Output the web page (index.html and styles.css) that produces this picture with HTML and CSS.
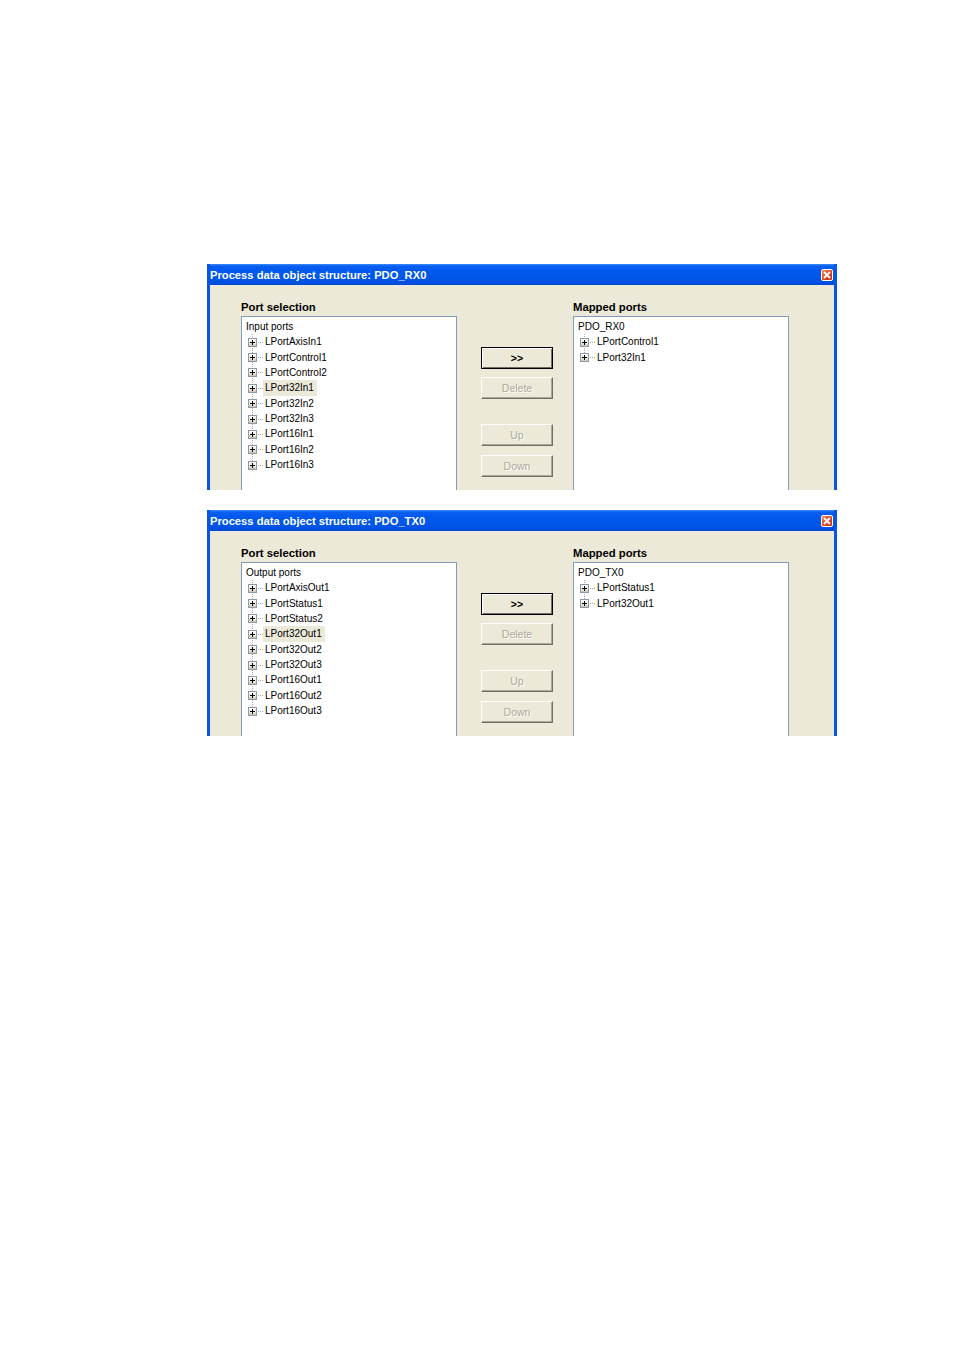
FILE: index.html
```html
<!DOCTYPE html>
<html>
<head>
  <meta charset="utf-8">
  <title>Process data object structure</title>
  <link rel="stylesheet" href="styles.css">
</head>
<body>
  <div class="page">

    <div class="window">
      <div class="titlebar">
        <span class="title">Process data object structure: PDO_RX0</span>
        <span class="close"><svg width="8" height="8" viewBox="0 0 8 8"><path d="M1 1L7 7M7 1L1 7" stroke="#fff" stroke-width="1.8"/></svg></span>
      </div>
      <div class="body">
        <div class="panel">
          <div class="caption">Port selection</div>
          <div class="tree">
            <div class="root">Input ports</div>
            <ul class="nodes">
              <li class="node"><span class="exp"></span><span class="conn"></span><span class="label">LPortAxisIn1</span></li>
              <li class="node"><span class="exp"></span><span class="conn"></span><span class="label">LPortControl1</span></li>
              <li class="node"><span class="exp"></span><span class="conn"></span><span class="label">LPortControl2</span></li>
              <li class="node"><span class="exp"></span><span class="conn"></span><span class="label selected">LPort32In1</span></li>
              <li class="node"><span class="exp"></span><span class="conn"></span><span class="label">LPort32In2</span></li>
              <li class="node"><span class="exp"></span><span class="conn"></span><span class="label">LPort32In3</span></li>
              <li class="node"><span class="exp"></span><span class="conn"></span><span class="label">LPort16In1</span></li>
              <li class="node"><span class="exp"></span><span class="conn"></span><span class="label">LPort16In2</span></li>
              <li class="node"><span class="exp"></span><span class="conn"></span><span class="label">LPort16In3</span></li>
            </ul>
          </div>
        </div>
        <div class="buttons">
          <button class="btn default">&gt;&gt;</button>
          <button class="btn disabled">Delete</button>
          <button class="btn disabled up">Up</button>
          <button class="btn disabled">Down</button>
        </div>
        <div class="panel">
          <div class="caption">Mapped ports</div>
          <div class="tree">
            <div class="root">PDO_RX0</div>
            <ul class="nodes">
              <li class="node"><span class="exp"></span><span class="conn"></span><span class="label">LPortControl1</span></li>
              <li class="node"><span class="exp"></span><span class="conn"></span><span class="label">LPort32In1</span></li>
            </ul>
          </div>
        </div>
      </div>
    </div>

    <div class="window">
      <div class="titlebar">
        <span class="title">Process data object structure: PDO_TX0</span>
        <span class="close"><svg width="8" height="8" viewBox="0 0 8 8"><path d="M1 1L7 7M7 1L1 7" stroke="#fff" stroke-width="1.8"/></svg></span>
      </div>
      <div class="body">
        <div class="panel">
          <div class="caption">Port selection</div>
          <div class="tree">
            <div class="root">Output ports</div>
            <ul class="nodes">
              <li class="node"><span class="exp"></span><span class="conn"></span><span class="label">LPortAxisOut1</span></li>
              <li class="node"><span class="exp"></span><span class="conn"></span><span class="label">LPortStatus1</span></li>
              <li class="node"><span class="exp"></span><span class="conn"></span><span class="label">LPortStatus2</span></li>
              <li class="node"><span class="exp"></span><span class="conn"></span><span class="label selected">LPort32Out1</span></li>
              <li class="node"><span class="exp"></span><span class="conn"></span><span class="label">LPort32Out2</span></li>
              <li class="node"><span class="exp"></span><span class="conn"></span><span class="label">LPort32Out3</span></li>
              <li class="node"><span class="exp"></span><span class="conn"></span><span class="label">LPort16Out1</span></li>
              <li class="node"><span class="exp"></span><span class="conn"></span><span class="label">LPort16Out2</span></li>
              <li class="node"><span class="exp"></span><span class="conn"></span><span class="label">LPort16Out3</span></li>
            </ul>
          </div>
        </div>
        <div class="buttons">
          <button class="btn default">&gt;&gt;</button>
          <button class="btn disabled">Delete</button>
          <button class="btn disabled up">Up</button>
          <button class="btn disabled">Down</button>
        </div>
        <div class="panel">
          <div class="caption">Mapped ports</div>
          <div class="tree">
            <div class="root">PDO_TX0</div>
            <ul class="nodes">
              <li class="node"><span class="exp"></span><span class="conn"></span><span class="label">LPortStatus1</span></li>
              <li class="node"><span class="exp"></span><span class="conn"></span><span class="label">LPort32Out1</span></li>
            </ul>
          </div>
        </div>
      </div>
    </div>

  </div>
</body>
</html>
```

FILE: styles.css
```css
html,body{
  margin: 0;
  background: #fff;
}
.page{
  padding: 264px 0 0 207px;
  display: flex;
  flex-direction: column;
  gap: 20px;
  font-family: "Liberation Sans", Arial, sans-serif;
}
.window{
  width: 630px;
  height: 226px;
  box-sizing: border-box;
  overflow: hidden;
  background: #ece9d8;
  border-left: 3px solid #0855e0;
  border-right: 3px solid #0855e0;
}
.titlebar{
  height: 21px;
  margin: 0 -3px;
  padding: 0 4px 0 3px;
  display: flex;
  align-items: center;
  justify-content: space-between;
  background: linear-gradient(#3c8dff 0, #0a5ff0 2px, #0058ee 8px, #0055e6 16px, #0048d8 100%);
}
.title{
  color: #fff;
  font-weight: bold;
  font-size: 11.2px;
  line-height: 21px;
  padding-top: 2px;
}
.close{
  width: 12px;
  height: 12px;
  box-sizing: border-box;
  border: 1px solid #fff;
  border-radius: 2px;
  background: linear-gradient(135deg, #f08a6a, #e0481f 50%, #c83210);
  display: flex;
  align-items: center;
  justify-content: center;
}
.close svg{
  display: block;
}
.body{
  display: flex;
  align-items: flex-start;
  padding: 15px 0 0 31px;
}
.panel{
  width: 216px;
}
.caption{
  font-weight: bold;
  font-size: 11.3px;
  line-height: 14px;
  margin-bottom: 2px;
  color: #000;
}
.tree{
  height: 200px;
  box-sizing: border-box;
  background: #fff;
  border: 1px solid #7f9db9;
  padding-top: 2px;
  font-size: 10px;
  line-height: 15.4px;
  color: #000;
}
.root{
  padding-left: 4px;
}
.nodes{
  list-style: none;
  margin: 0;
  padding: 0;
  background-image: repeating-linear-gradient(to bottom, #a8a8a8 0, #a8a8a8 1px, transparent 1px, transparent 2px);
  background-size: 1px calc(100% - 8px);
  background-position: 10px 0;
  background-repeat: no-repeat;
}
.node{
  display: flex;
  align-items: center;
  height: 15.4px;
  padding-left: 6px;
}
.exp{
  width: 9px;
  height: 9px;
  box-sizing: border-box;
  border: 1px solid #8c9aa8;
  background: linear-gradient(#fff, #e6e2d6 70%, #c8c3b4);
  position: relative;
  flex: none;
}
.exp:before,.exp:after{
  content: "";
  position: absolute;
  background: #000;
}
.exp:before{
  left: 1px;
  top: 3px;
  width: 5px;
  height: 1px;
}
.exp:after{
  left: 3px;
  top: 1px;
  width: 1px;
  height: 5px;
}
.conn{
  width: 5px;
  height: 1px;
  margin: 0 0 0 1px;
  background-image: repeating-linear-gradient(to right, #a8a8a8 0, #a8a8a8 1px, transparent 1px, transparent 2px);
  flex: none;
}
.label{
  padding: 0 3px 0 2px;
  line-height: 16px;
}
.selected{
  background: #ece9d8;
}
.buttons{
  width: 72px;
  margin: 47px 20px 0 24px;
  display: flex;
  flex-direction: column;
}
.btn{
  width: 72px;
  height: 22px;
  margin: 0 0 8px;
  padding: 0;
  box-sizing: border-box;
  background: #ece9d8;
  font-family: "Liberation Sans", Arial, sans-serif;
  font-size: 10.5px;
  border: 1px solid;
  border-color: #fff #716f64 #716f64 #fff;
  box-shadow: inset -1px -1px #aca899;
}
.btn.default{
  border-color: #000;
  box-shadow: inset 1px 1px #fff, inset -1px -1px #716f64;
  color: #000;
  font-weight: bold;
}
.btn.disabled{
  color: #aca899;
  text-shadow: 1px 1px #fff;
}
.btn.up{
  margin-top: 17px;
  margin-bottom: 9px;
}
```
